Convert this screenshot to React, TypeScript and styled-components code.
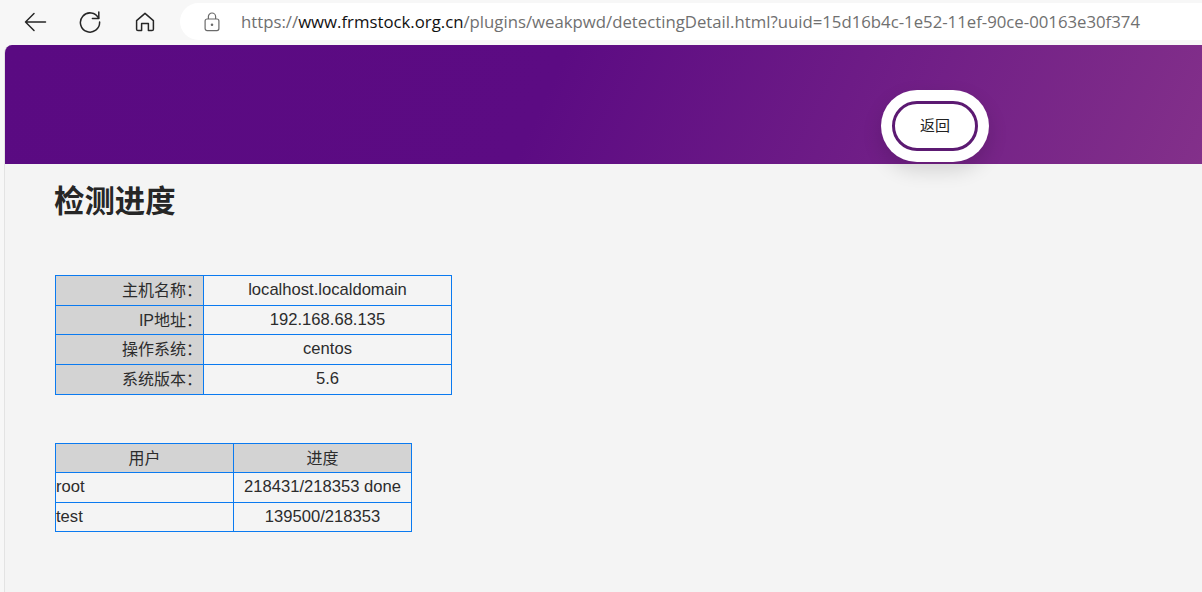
import React from 'react';
import styled, { createGlobalStyle } from 'styled-components';

const GlobalStyle = createGlobalStyle`
  html, body {
    margin: 0;
    padding: 0;
    height: 100%;
    overflow: hidden;
    background: #f7f7f7;
  }
`;

const hostRows = [
  { label: '主机名称：', value: 'localhost.localdomain', height: 30 },
  { label: 'IP地址：', value: '192.168.68.135', height: 29 },
  { label: '操作系统：', value: 'centos', height: 30 },
  { label: '系统版本：', value: '5.6', height: 30 },
];

const userRows = [
  { user: 'root', progress: '218431/218353 done', height: 30 },
  { user: 'test', progress: '139500/218353', height: 29 },
];

const App: React.FC = () => {
  return (
    <Window>
      <GlobalStyle />
      <Toolbar>
        <NavButton aria-label="back">
          <svg width="24" height="24" viewBox="0 0 24 24" fill="none" stroke="#262626" strokeWidth="1.5" strokeLinecap="round" strokeLinejoin="round">
            <path d="M22.5 12H2.5M11 3.5L2.5 12l8.5 8.5" />
          </svg>
        </NavButton>
        <NavButton aria-label="reload">
          <svg width="24" height="24" viewBox="0 0 24 24" fill="none" stroke="#262626" strokeWidth="1.5" strokeLinecap="round" strokeLinejoin="round">
            <path d="M20.6 8.2A9.6 9.6 0 1 0 21.6 12" />
            <path d="M14.4 8.4h6.4V2" />
          </svg>
        </NavButton>
        <NavButton aria-label="home">
          <svg width="22" height="22" viewBox="0 0 22 22" fill="none" stroke="#262626" strokeWidth="1.5" strokeLinejoin="round">
            <path d="M2.6 9.6L11 2.4l8.4 7.2v8.6a1.4 1.4 0 0 1-1.4 1.4h-3.6v-7h-6.8v7H4a1.4 1.4 0 0 1-1.4-1.4z" />
          </svg>
        </NavButton>
        <AddressBar>
          <svg width="16" height="20" viewBox="0 0 16 20" fill="none" stroke="#6b6b6b" strokeWidth="1.2">
            <rect x="1.1" y="7" width="13.8" height="11.6" rx="2" />
            <path d="M4.4 7V4.6a3.6 3.6 0 0 1 7.2 0V7" />
            <circle cx="8" cy="12.8" r="0.7" fill="#6b6b6b" />
          </svg>
          <Url>
            https://<Domain>www.frmstock.org.cn</Domain>/plugins/weakpwd/detectingDetail.html?uuid=15d16b4c-1e52-11ef-90ce-00163e30f374
          </Url>
        </AddressBar>
      </Toolbar>
      <Page>
        <Banner>
          <BackPill>
            <BackButton>
              <BackLabel>返回</BackLabel>
            </BackButton>
          </BackPill>
        </Banner>
        <Content>
          <Title>检测进度</Title>
          <HostTable>
            <tbody>
              {hostRows.map((row) => (
                <Row key={row.label} $height={row.height}>
                  <LabelCell>{row.label}</LabelCell>
                  <Cell>{row.value}</Cell>
                </Row>
              ))}
            </tbody>
          </HostTable>
          <UserTable>
            <thead>
              <Row $height={29}>
                <HeadCell>用户</HeadCell>
                <HeadCell>进度</HeadCell>
              </Row>
            </thead>
            <tbody>
              {userRows.map((row) => (
                <Row key={row.user} $height={row.height}>
                  <Cell $align="left">{row.user}</Cell>
                  <Cell>{row.progress}</Cell>
                </Row>
              ))}
            </tbody>
          </UserTable>
        </Content>
      </Page>
    </Window>
  );
};

export default App;

const Window = styled.div`
  display: flex;
  flex-direction: column;
  width: 1202px;
  height: 592px;
  overflow: hidden;
  background: #f7f7f7;
  font-family: 'Liberation Sans', 'Noto Sans CJK SC', sans-serif;
`;

const Toolbar = styled.div`
  display: flex;
  align-items: center;
  flex: none;
  height: 39px;
  padding: 2px 0 4px 23px;
`;

const NavButton = styled.button`
  display: flex;
  align-items: center;
  justify-content: center;
  flex: none;
  width: 24px;
  height: 24px;
  margin-right: 31px;
  padding: 0;
  border: none;
  background: transparent;
`;

const AddressBar = styled.div`
  display: flex;
  align-items: center;
  flex: 1;
  height: 37px;
  margin-left: -8px;
  padding-left: 24px;
  background: #fff;
  border-radius: 19px 0 0 19px;
`;

const Url = styled.span`
  margin-left: 21px;
  font-family: 'Open Sans', 'Noto Sans', sans-serif;
  font-size: 16.75px;
  color: #707070;
  white-space: nowrap;
`;

const Domain = styled.span`
  color: #111;
`;

const Page = styled.div`
  display: flex;
  flex-direction: column;
  flex: 1;
  margin-left: 4px;
  border-left: 1px solid #e3e3e3;
  border-top-left-radius: 8px;
  background: #f4f4f4;
  overflow: hidden;
`;

const Banner = styled.div`
  display: flex;
  align-items: flex-end;
  flex: none;
  height: 119px;
  padding: 0 0 2px 876px;
  box-sizing: border-box;
  background: linear-gradient(115deg, #5a0a82 0%, #5c0b83 45%, #83308a 100%);
`;

const BackPill = styled.div`
  display: flex;
  align-items: center;
  justify-content: center;
  width: 108px;
  height: 72px;
  border-radius: 36px;
  background: #fff;
  box-shadow: 0 8px 20px rgba(0, 0, 0, 0.14);
`;

const BackButton = styled.button`
  width: 86px;
  height: 50px;
  padding: 0;
  border: 3px solid #5c1a72;
  border-radius: 25px;
  background: #fff;
  font-family: inherit;
  font-size: 15px;
  color: #222;
`;

const BackLabel = styled.span`
  display: block;
  padding-bottom: 3px;
`;

const Content = styled.div`
  display: flex;
  flex-direction: column;
  align-items: flex-start;
  padding-left: 49px;
`;

const Title = styled.h1`
  margin: 19px 0 56px;
  font-size: 30.4px;
  line-height: 36px;
  font-weight: 700;
  color: #262626;
`;

const BaseTable = styled.table`
  border-collapse: collapse;
  table-layout: fixed;
  margin-left: 1px;
  font-size: 16px;
  color: #2c2c2c;
  td, th {
    border: 1px solid #0a7af0;
    padding: 0;
    font-weight: 400;
  }
`;

const HostTable = styled(BaseTable)`
  width: 397px;
  margin-bottom: 48px;
  td:first-child {
    width: 146px;
  }
`;

const UserTable = styled(BaseTable)`
  width: 357px;
  th:first-child {
    width: 177px;
  }
`;

const Row = styled.tr<{ $height: number }>`
  height: ${(props) => props.$height}px;
`;

const Cell = styled.td<{ $align?: string }>`
  text-align: ${(props) => props.$align || 'center'};
  font-size: 16.6px;
  && {
    padding-bottom: 1px;
  }
`;

const LabelCell = styled.td`
  text-align: right;
  background: #d3d3d3;
  && {
    padding: 0 1px 3px 0;
  }
`;

const HeadCell = styled.th`
  text-align: center;
  background: #d3d3d3;
  && {
    padding-bottom: 3px;
  }
`;
